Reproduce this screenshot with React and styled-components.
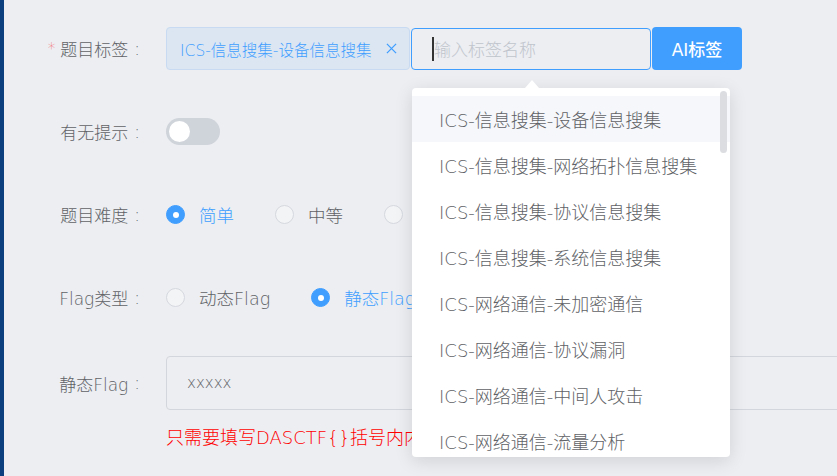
import React from "react";
import styled, { createGlobalStyle } from "styled-components";

const options = [
  "ICS-信息搜集-设备信息搜集",
  "ICS-信息搜集-网络拓扑信息搜集",
  "ICS-信息搜集-协议信息搜集",
  "ICS-信息搜集-系统信息搜集",
  "ICS-网络通信-未加密通信",
  "ICS-网络通信-协议漏洞",
  "ICS-网络通信-中间人攻击",
  "ICS-网络通信-流量分析",
];

export default function App() {
  return (
    <>
      <GlobalStyle />
      <Page>
        <SideEdge />
        <Form>
          <Item $gap={40}>
            <Label $h={43} $required>
              题目标签<Colon>:</Colon>
            </Label>
            <TagField>
              <Tag>
                <span>ICS-信息搜集-设备信息搜集</span>
                <CloseIcon viewBox="0 0 12 12">
                  <path d="M1 1L11 11M11 1L1 11" />
                </CloseIcon>
              </Tag>
              <TagInput>
                <Caret />
                <Placeholder>输入标签名称</Placeholder>
              </TagInput>
              <AiButton>AI标签</AiButton>
              <Dropdown>
                <Arrow />
                <ScrollThumb />
                <OptionList>
                  {options.map((o, i) => (
                    <Option key={o} $hover={i === 0}>
                      {o}
                    </Option>
                  ))}
                </OptionList>
              </Dropdown>
            </TagField>
          </Item>

          <Item $gap={40}>
            <Label $h={43}>
              有无提示<Colon>:</Colon>
            </Label>
            <Control>
              <Switch>
                <Knob />
              </Switch>
            </Control>
          </Item>

          <Item $gap={40}>
            <Label $h={43}>
              题目难度<Colon>:</Colon>
            </Label>
            <Control>
              <RadioOption $checked>
                <RadioDot $checked />
                简单
              </RadioOption>
              <RadioOption>
                <RadioDot />
                中等
              </RadioOption>
              <RadioOption>
                <RadioDot />
                困难
              </RadioOption>
            </Control>
          </Item>

          <Item $gap={37}>
            <Label $h={43}>
              Flag类型<Colon>:</Colon>
            </Label>
            <Control>
              <RadioOption>
                <RadioDot />
                动态Flag
              </RadioOption>
              <RadioOption $checked>
                <RadioDot $checked />
                静态Flag
              </RadioOption>
            </Control>
          </Item>

          <Item $gap={0}>
            <Label $h={54}>
              静态Flag<Colon>:</Colon>
            </Label>
            <Column>
              <FlagInput>xxxxx</FlagInput>
              <Tip>只需要填写DASCTF{"{}"}括号内内容</Tip>
            </Column>
          </Item>
        </Form>
      </Page>
    </>
  );
}

const GlobalStyle = createGlobalStyle`
  html, body {
    margin: 0;
    padding: 0;
    background: #eceef2;
    overflow: hidden;
  }
  body {
    font-family: "DejaVu Sans", "Noto Sans CJK SC", sans-serif;
    font-weight: 300;
    color: #606266;
  }
`;

const Page = styled.div`
  display: flex;
  width: 837px;
  height: 476px;
  overflow: hidden;
`;

const SideEdge = styled.div`
  width: 4px;
  flex-shrink: 0;
  background: #0b3f7e;
`;

const Form = styled.div`
  flex: 1;
  min-width: 0;
  padding-top: 27px;
`;

const Item = styled.div`
  display: flex;
  align-items: flex-start;
  margin-bottom: ${(p) => p.$gap}px;
`;

const Label = styled.div`
  width: 136px;
  padding-right: 26px;
  height: ${(p) => p.$h}px;
  flex-shrink: 0;
  display: flex;
  align-items: center;
  justify-content: flex-end;
  font-size: 17px;
  color: #606266;
  white-space: nowrap;

  &::before {
    content: ${(p) => (p.$required ? '"*"' : "none")};
    color: #f56c6c;
    margin-right: 5px;
    font-size: 15px;
  }
`;

const Colon = styled.span`
  margin-left: 6px;
`;

const Control = styled.div`
  height: 43px;
  display: flex;
  align-items: center;
`;

const Column = styled.div`
  display: flex;
  flex-direction: column;
`;

const TagField = styled.div`
  position: relative;
  display: flex;
  align-items: center;
  height: 43px;
`;

const Tag = styled.div`
  box-sizing: border-box;
  width: 244px;
  height: 43px;
  display: flex;
  align-items: center;
  justify-content: space-between;
  padding: 0 12px 0 13px;
  background: #dce6f2;
  border: 1px solid #c8daf1;
  border-radius: 4px;
  color: #409eff;
  font-size: 15.5px;
  white-space: nowrap;
`;

const CloseIcon = styled.svg`
  width: 11px;
  height: 11px;
  fill: none;
  stroke: #409eff;
  stroke-width: 1.4;
`;

const TagInput = styled.div`
  box-sizing: border-box;
  width: 240px;
  height: 42px;
  margin-left: 1px;
  display: flex;
  align-items: center;
  padding-left: 20px;
  border: 1px solid #409eff;
  border-radius: 4px;
`;

const Caret = styled.span`
  width: 2px;
  height: 24px;
  background: #333;
`;

const Placeholder = styled.span`
  font-size: 17px;
  color: #c0c4cc;
`;

const AiButton = styled.button`
  box-sizing: border-box;
  width: 90px;
  height: 43px;
  margin-left: 1px;
  border: none;
  border-radius: 4px;
  background: #409eff;
  color: #fff;
  font-family: inherit;
  font-size: 17px;
  font-weight: 500;
`;

const Dropdown = styled.div`
  position: absolute;
  z-index: 10;
  top: 61px;
  left: 246px;
  width: 318px;
  height: 369px;
  box-sizing: border-box;
  background: #fff;
  border-radius: 4px;
  box-shadow: 0 4px 18px rgba(0, 0, 0, 0.12);
`;

const Arrow = styled.div`
  position: absolute;
  top: -8px;
  left: 113px;
  width: 0;
  height: 0;
  border-left: 7px solid transparent;
  border-right: 7px solid transparent;
  border-bottom: 8px solid #fff;
`;

const ScrollThumb = styled.div`
  position: absolute;
  top: 3px;
  right: 3px;
  width: 7px;
  height: 62px;
  border-radius: 4px;
  background: #dcdde1;
  z-index: 1;
`;

const OptionList = styled.ul`
  list-style: none;
  margin: 0;
  padding: 8px 0 0;
  height: 100%;
  box-sizing: border-box;
  overflow: hidden;
  border-radius: 4px;
`;

const Option = styled.li`
  height: 46px;
  display: flex;
  align-items: center;
  padding-left: 27px;
  font-size: 18px;
  color: #606266;
  white-space: nowrap;
  background: ${(p) => (p.$hover ? "#f5f7fa" : "transparent")};
`;

const Switch = styled.div`
  box-sizing: border-box;
  width: 54px;
  height: 27px;
  border-radius: 14px;
  background: #cfd3da;
  padding: 3px;
  display: flex;
  align-items: center;
`;

const Knob = styled.div`
  width: 21px;
  height: 21px;
  border-radius: 50%;
  background: #fff;
`;

const RadioOption = styled.div`
  display: flex;
  align-items: center;
  margin-right: 41px;
  font-size: 17.5px;
  white-space: nowrap;
  color: ${(p) => (p.$checked ? "#409eff" : "#606266")};
`;

const RadioDot = styled.span`
  box-sizing: border-box;
  width: 19px;
  height: 19px;
  margin-right: 14px;
  border-radius: 50%;
  border: 1px solid ${(p) => (p.$checked ? "#409eff" : "#d5d8de")};
  background: ${(p) => (p.$checked ? "#409eff" : "#f3f4f6")};
  display: flex;
  align-items: center;
  justify-content: center;

  &::after {
    content: "";
    width: 6px;
    height: 6px;
    border-radius: 50%;
    background: #fff;
    display: ${(p) => (p.$checked ? "block" : "none")};
  }
`;

const FlagInput = styled.div`
  box-sizing: border-box;
  width: 720px;
  height: 54px;
  display: flex;
  align-items: center;
  padding-left: 20px;
  border: 1px solid #d3d6dc;
  border-radius: 4px;
  font-size: 15px;
  color: #606266;
`;

const Tip = styled.div`
  margin-top: 16px;
  font-size: 18px;
  line-height: 24px;
  color: #ff0000;
  white-space: nowrap;
`;
